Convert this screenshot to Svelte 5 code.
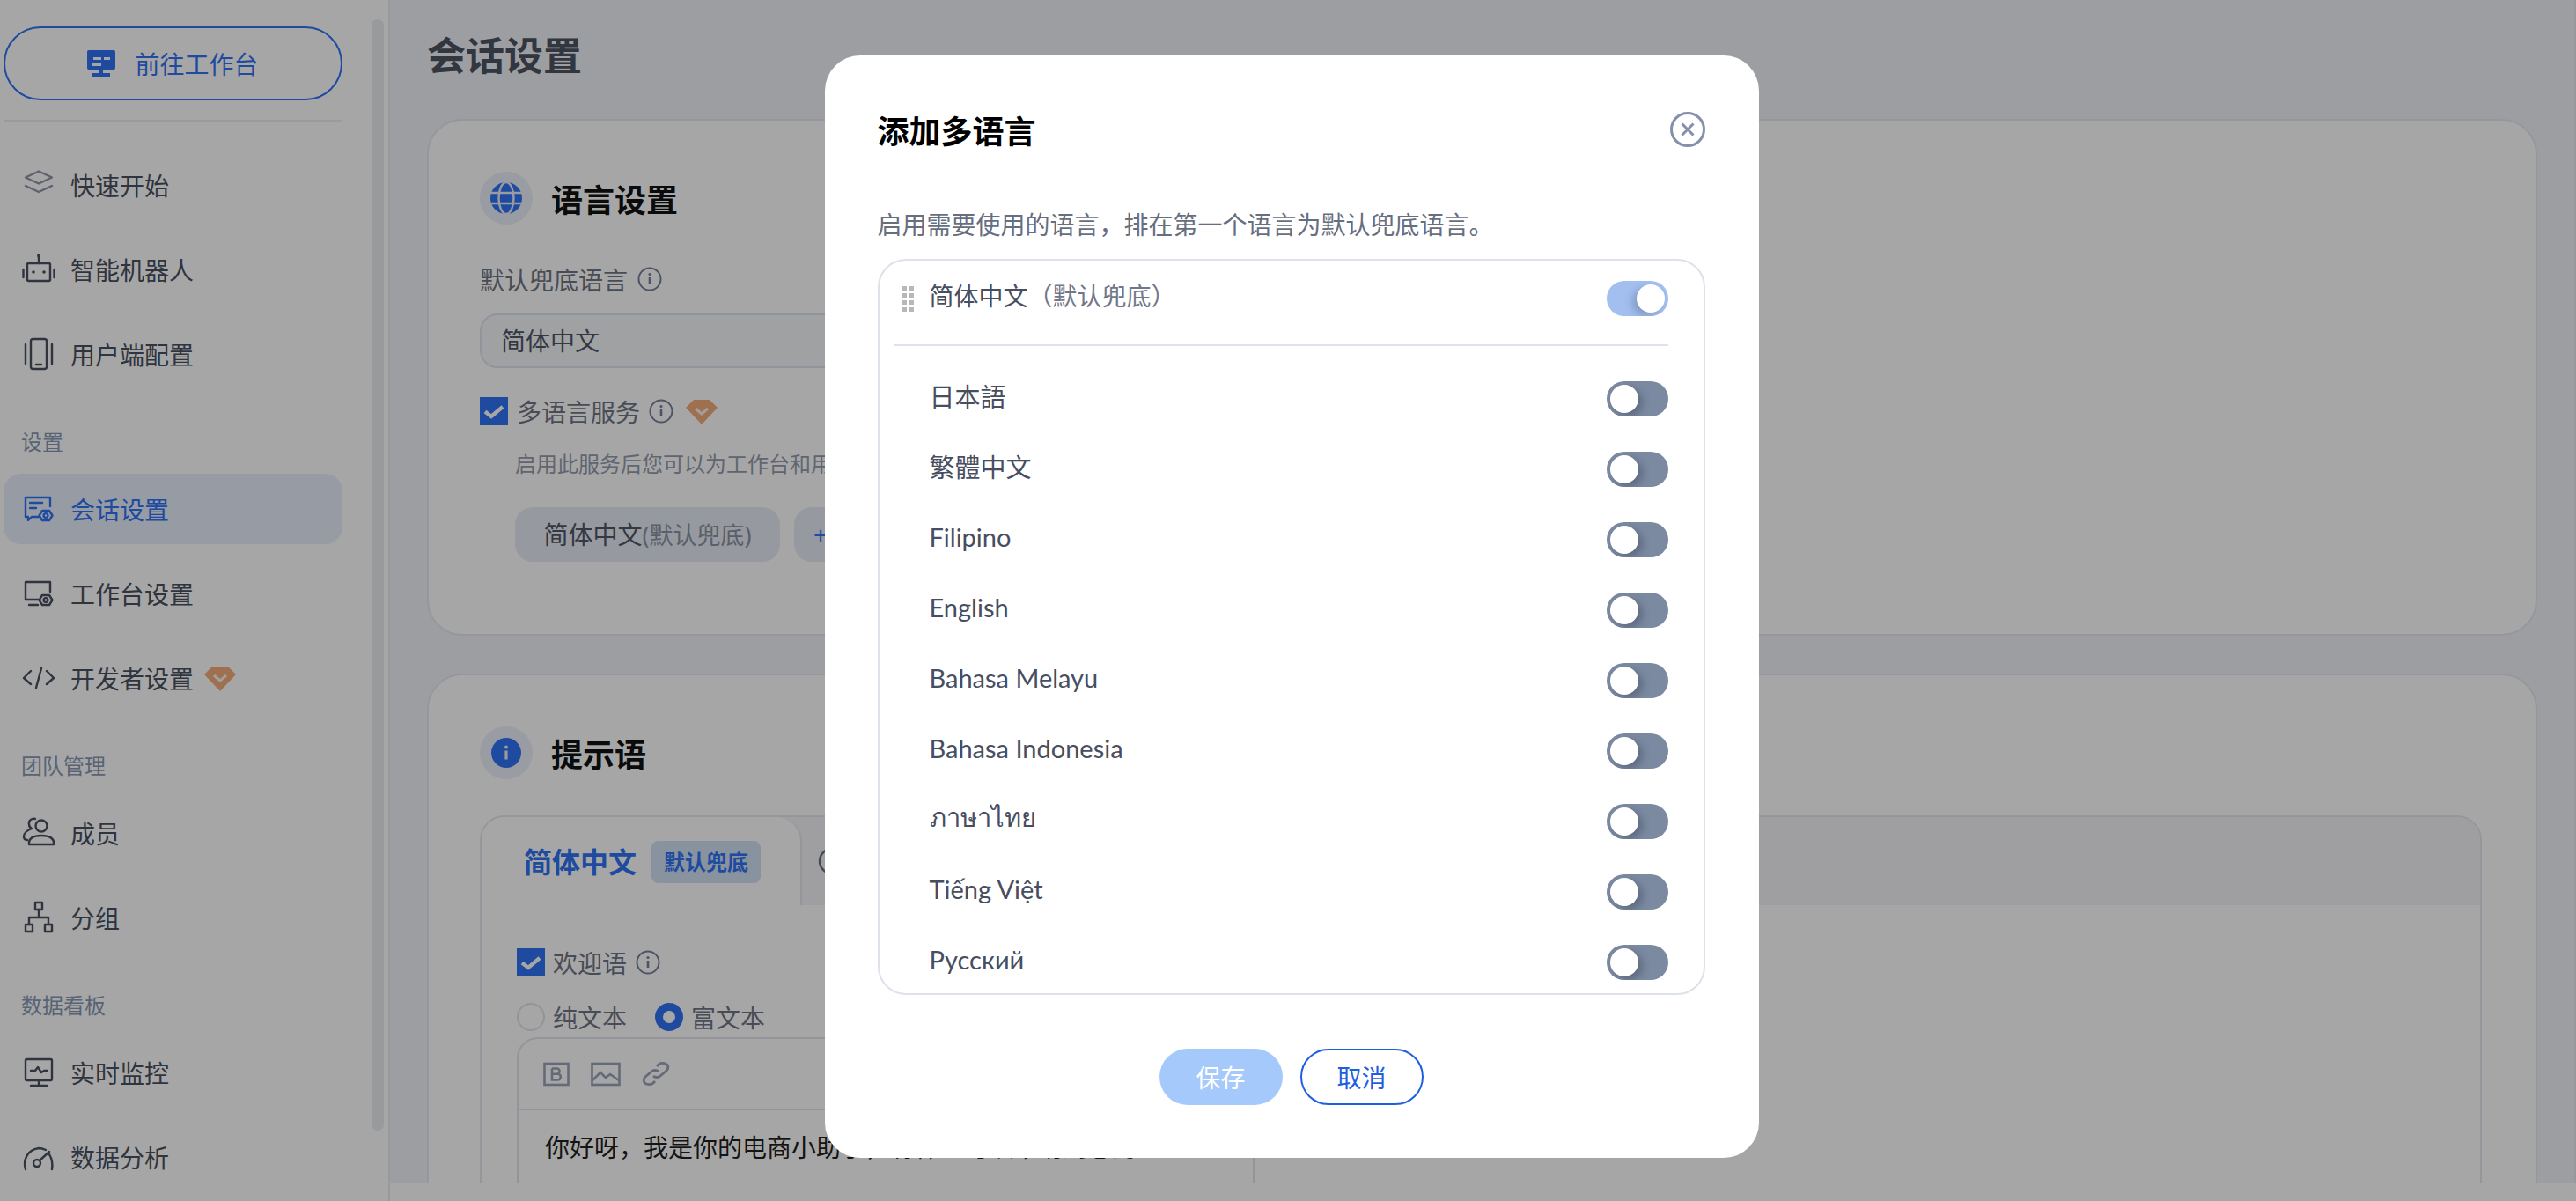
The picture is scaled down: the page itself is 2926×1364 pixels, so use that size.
<script>
	const nav = [
		{ type: 'item', label: '快速开始', icon: 'layers' },
		{ type: 'item', label: '智能机器人', icon: 'robot' },
		{ type: 'item', label: '用户端配置', icon: 'device' },
		{ type: 'section', label: '设置' },
		{ type: 'item', label: '会话设置', icon: 'chat', active: true },
		{ type: 'item', label: '工作台设置', icon: 'screen' },
		{ type: 'item', label: '开发者设置', icon: 'code', pro: true },
		{ type: 'section', label: '团队管理' },
		{ type: 'item', label: '成员', icon: 'members' },
		{ type: 'item', label: '分组', icon: 'group' },
		{ type: 'section', label: '数据看板' },
		{ type: 'item', label: '实时监控', icon: 'monitor' },
		{ type: 'item', label: '数据分析', icon: 'gauge' }
	];

	const languages = ['日本語', '繁體中文', 'Filipino', 'English', 'Bahasa Melayu', 'Bahasa Indonesia', 'ภาษาไทย', 'Tiếng Việt', 'Русский'];
</script>

{#snippet navIcon(name)}
	<svg class="nav-icon" viewBox="0 0 40 40" fill="none" stroke="currentColor" stroke-width="2.4" stroke-linejoin="round" stroke-linecap="round">
		{#if name === 'layers'}
			<path d="M20 4.5 35 11.5 20 18.5 5 11.5Z" />
			<path d="M5 21 20 28 35 21" />
		{:else if name === 'robot'}
			<rect x="7" y="13" width="26" height="20" rx="1.5" />
			<path d="M20 13V6M2.5 20v9M37.5 20v9" />
			<circle cx="20" cy="4.5" r="2" fill="currentColor" stroke="none" />
			<circle cx="14" cy="23" r="1.8" fill="currentColor" stroke="none" />
			<circle cx="26" cy="23" r="1.8" fill="currentColor" stroke="none" />
		{:else if name === 'device'}
			<rect x="11" y="3" width="18" height="34" rx="2.5" />
			<path d="M5 9v22M35 9v22M17 32h6" />
		{:else if name === 'chat'}
			<path d="M20 29H12L8 33v-4H5V7h28v10" />
			<path d="M10 13h14M10 19h7" />
			<path d="M20.5 27.5 24 22h8l3.5 5.5L32 33h-8Z" />
			<circle cx="28" cy="27.5" r="2.4" />
		{:else if name === 'screen'}
			<path d="M19 27H5V7h28v11" />
			<path d="M9 33h10" />
			<path d="M20.5 27.5 24 22h8l3.5 5.5L32 33h-8Z" />
			<circle cx="28" cy="27.5" r="2.4" />
		{:else if name === 'code'}
			<path d="M11 12 3 20l8 7M29 12l8 8-8 7M23 9l-6 22" />
		{:else if name === 'members'}
			<circle cx="23" cy="12" r="6.5" />
			<path d="M9 33c-1-7 5-10 14-10s15 3 14 10Z" />
			<path d="M16 4c-4-1-8 2-7 6 0 2 1 4 3 5-5 2-9 5-9 9 0 3 2 4 4 4" />
		{:else if name === 'group'}
			<rect x="16" y="3" width="8" height="8" />
			<rect x="5" y="28" width="8" height="8" />
			<rect x="27" y="28" width="8" height="8" />
			<path d="M20 11v9M9 28v-8h22v8" />
		{:else if name === 'monitor'}
			<rect x="5" y="5" width="30" height="24" rx="1.5" />
			<path d="M20 29v6M11 35h18M11 18h5l3-4 4 6 3-2h4" />
		{:else if name === 'gauge'}
			<path d="M5 34c-3-9 1-22 15-24 4 0 6 1 8 2M32 17c3 5 4 11 3 17" />
			<circle cx="18" cy="27" r="4" />
			<path d="M21 24 32 14" />
		{/if}
	</svg>
{/snippet}

{#snippet proBadge()}
	<svg class="pro" viewBox="0 0 36 29">
		<path d="M9 1h18l9 9-18 19L0 10Z" fill="#f5ad7c" />
		<path d="M11 11l7 6 7-6" fill="none" stroke="#f4f4f4" stroke-width="3" />
	</svg>
{/snippet}

{#snippet infoTip()}
	<svg class="info" viewBox="0 0 28 28" fill="none" stroke="currentColor" stroke-width="2">
		<circle cx="14" cy="14" r="12.5" />
		<path d="M14 12v8" stroke-width="2.6" />
		<circle cx="14" cy="8.5" r="1.6" fill="currentColor" stroke="none" />
	</svg>
{/snippet}

<div class="page">
	<aside class="sidebar">
		<button class="workbench">
			<svg class="workbench-icon" viewBox="0 0 32 30">
				<path fill-rule="evenodd" d="M2 0h28a2 2 0 0 1 2 2v18a2 2 0 0 1-2 2H2a2 2 0 0 1-2-2V2a2 2 0 0 1 2-2ZM7 8v3h9V8Zm-1 7v3h10v-3Zm13-7v3h7V8Z" fill="#2f72f5" />
				<rect x="6" y="26" width="20" height="4" fill="#2f72f5" />
				<rect x="14" y="21" width="4" height="6" fill="#2f72f5" />
			</svg>
			前往工作台
		</button>
		<div class="side-divider"></div>
		<nav>
			{#each nav as entry}
				{#if entry.type === 'section'}
					<div class="section">{entry.label}</div>
				{:else}
					<div class="nav-item" class:active={entry.active} class:soft={entry.icon === 'layers'}>
						{@render navIcon(entry.icon)}
						<span>{entry.label}</span>
						{#if entry.pro}{@render proBadge()}{/if}
					</div>
				{/if}
			{/each}
		</nav>
		<div class="side-scroll"></div>
	</aside>

	<main>
		<h1>会话设置</h1>

		<section class="card first">
			<div class="card-head">
				<span class="head-icon">
					<svg viewBox="0 0 36 36" width="36" height="36">
						<circle cx="18" cy="18" r="18" fill="#2f72f5" />
						<ellipse cx="18" cy="18" rx="8.5" ry="18" fill="none" stroke="#eceff8" stroke-width="2.4" />
						<path d="M0 12h36M0 24h36" stroke="#eceff8" stroke-width="2.4" />
					</svg>
				</span>
				<h2>语言设置</h2>
			</div>
			<div class="field-label">默认兜底语言 {@render infoTip()}</div>
			<div class="select">简体中文</div>
			<div class="check-row">
				<span class="checkbox"><svg viewBox="0 0 32 32"><path d="M6 16.5 13 22 26 11" fill="none" stroke="#fff" stroke-width="4.4" /></svg></span>
				<span>多语言服务</span>
				{@render infoTip()}
				{@render proBadge()}
			</div>
			<p class="hint">启用此服务后您可以为工作台和用户端配置多语言内容</p>
			<div class="chips">
				<span class="chip">简体中文<em>(默认兜底)</em></span>
				<span class="chip add"><b>+</b>添加多语言</span>
			</div>
		</section>

		<section class="card">
			<div class="card-head">
				<span class="head-icon">
					<svg viewBox="0 0 34 34" width="34" height="34">
						<circle cx="17" cy="17" r="17" fill="#2f72f5" />
						<rect x="15.4" y="14.5" width="3.2" height="10" fill="#eee" />
						<circle cx="17" cy="10.5" r="2" fill="#eee" />
					</svg>
				</span>
				<h2>提示语</h2>
			</div>
			<div class="tabs-panel">
				<div class="tabs">
					<div class="tab active">简体中文<span class="tag">默认兜底</span></div>
					<div class="tab-more"><svg viewBox="0 0 32 32" width="32" height="32" fill="none" stroke="#69707f" stroke-width="2.4"><circle cx="16" cy="16" r="14" /></svg></div>
				</div>
				<div class="tab-body">
					<div class="check-row small">
						<span class="checkbox"><svg viewBox="0 0 32 32"><path d="M6 16.5 13 22 26 11" fill="none" stroke="#fff" stroke-width="4.4" /></svg></span>
						<span>欢迎语</span>
						{@render infoTip()}
					</div>
					<div class="radios">
						<label class="radio"><span class="dot"></span>纯文本</label>
						<label class="radio on"><span class="dot"></span>富文本</label>
					</div>
					<div class="editor">
						<div class="toolbar">
							<svg viewBox="0 0 30 30" width="30" height="30" fill="none" stroke="currentColor" stroke-width="2.6">
								<rect x="1.5" y="3" width="27" height="24" />
								<path d="M10 8.5v13h6.5a3.4 3.4 0 0 0 0-6.8H10m0 0h5.5a3.1 3.1 0 0 0 0-6.2H10" />
							</svg>
							<svg viewBox="0 0 34 30" width="34" height="30" fill="none" stroke="currentColor" stroke-width="2.6">
								<rect x="1.5" y="3" width="31" height="24" />
								<path d="M2 22 11 13l6 6 5-4 10 7" />
							</svg>
							<svg viewBox="0 0 32 30" width="32" height="30" fill="none" stroke="currentColor" stroke-width="2.8">
								<path d="M13 17c2 2 6 2 8 0l7-6c3-3 2-7-1-8s-6-1-8 1l-2 2" />
								<path d="M19 12c-2-2-6-2-8 0l-7 6c-3 3-2 7 1 8s6 1 8-1l2-2" />
							</svg>
						</div>
						<div class="editor-text">你好呀，我是你的电商小助手，有什么可以帮助到您的？</div>
					</div>
				</div>
			</div>
		</section>
	</main>
</div>

<div class="overlay">
	<div class="modal">
		<div class="modal-head">
			<h3>添加多语言</h3>
			<svg viewBox="0 0 40 40" width="40" height="40" fill="none" stroke="#8590ab" stroke-width="3">
				<circle cx="20" cy="20" r="18.5" />
				<path d="M13.5 13.5l13 13M26.5 13.5l-13 13" />
			</svg>
		</div>
		<p class="desc">启用需要使用的语言，排在第一个语言为默认兜底语言。</p>
		<div class="lang-box">
			<div class="lang-row default">
				<span class="handle">
					{#each Array(8) as _}<i></i>{/each}
				</span>
				<span class="lang-name">简体中文<em>（默认兜底）</em></span>
				<span class="switch on"><span class="knob"></span></span>
			</div>
			<div class="lang-divider"></div>
			{#each languages as lang}
				<div class="lang-row">
					<span class="lang-name">{lang}</span>
					<span class="switch"><span class="knob"></span></span>
				</div>
			{/each}
		</div>
		<div class="modal-actions">
			<button class="save">保存</button>
			<button class="cancel">取消</button>
		</div>
	</div>
</div>

<style>
	:global(body) {
		margin: 0;
		background: #fff;
		font-family: "Noto Sans", "Noto Sans CJK SC", sans-serif;
	}

	.page {
		display: flex;
		height: 1364px;
		overflow: hidden;
	}

	/* sidebar */
	.sidebar {
		position: relative;
		box-sizing: border-box;
		flex: 0 0 443px;
		padding: 30px 0 0 4px;
		border-right: 2px solid #ebedf1;
		overflow: hidden;
	}

	.workbench {
		display: flex;
		align-items: center;
		justify-content: center;
		gap: 22px;
		box-sizing: border-box;
		width: 385px;
		height: 84px;
		border: 2px solid #2f72f5;
		border-radius: 42px;
		background: transparent;
		color: #2f72f5;
		font: inherit;
		font-size: 28px;
	}

	.workbench-icon {
		width: 32px;
		height: 30px;
	}

	.side-divider {
		width: 385px;
		height: 2px;
		margin-top: 22px;
		background: #eceef2;
	}

	nav {
		padding-top: 32px;
		width: 385px;
	}

	.nav-item {
		display: flex;
		align-items: center;
		height: 80px;
		margin-bottom: 16px;
		padding-left: 20px;
		border-radius: 20px;
		color: #4a5161;
		font-size: 28px;
	}

	.nav-item.active {
		background: #e9effa;
		color: #2f72f5;
	}

	.nav-item.soft .nav-icon {
		color: #8f97a8;
	}

	.nav-icon {
		flex: none;
		width: 40px;
		height: 40px;
		margin-right: 16px;
	}

	.pro {
		width: 36px;
		height: 29px;
		margin-left: 12px;
		flex: none;
	}

	.section {
		height: 36px;
		margin: 42px 0 18px 20px;
		color: #8798b5;
		font-size: 24px;
		line-height: 36px;
	}

	.side-scroll {
		position: absolute;
		top: 22px;
		left: 422px;
		width: 14px;
		height: 1262px;
		border-radius: 7px;
		background: #ecedef;
	}

	/* main */
	main {
		flex: 1;
		box-sizing: border-box;
		height: 1344px;
		padding: 0 42px 0 42px;
		border-right: 2px solid #e8eaee;
		background: #f1f3f9;
		overflow: hidden;
	}

	h1 {
		height: 126px;
		margin: 0 0 9px;
		color: #4d5361;
		font-size: 44px;
		font-weight: 600;
		line-height: 126px;
	}

	.card {
		box-sizing: border-box;
		padding: 58px 58px 0;
		border: 2px solid #e6e9f2;
		border-radius: 40px;
		background: #fff;
		height: 900px;
	}

	.card.first {
		height: 587px;
		margin-bottom: 43px;
	}

	.card-head {
		display: flex;
		align-items: center;
		gap: 21px;
	}

	.head-icon {
		display: flex;
		align-items: center;
		justify-content: center;
		width: 60px;
		height: 60px;
		border-radius: 50%;
		background: #edf0fa;
	}

	h2 {
		margin: 0;
		color: #111;
		font-size: 36px;
		font-weight: 700;
	}

	.field-label {
		display: flex;
		align-items: center;
		gap: 11px;
		height: 40px;
		margin-top: 42px;
		color: #6f7686;
		font-size: 28px;
	}

	.info {
		width: 28px;
		height: 28px;
		color: #76809a;
		flex: none;
	}

	.select {
		box-sizing: border-box;
		width: 1120px;
		height: 62px;
		margin-top: 19px;
		padding-left: 22px;
		border: 2px solid #e0e4ee;
		border-radius: 20px;
		background: #f6f8fb;
		color: #4f5666;
		font-size: 28px;
		line-height: 58px;
	}

	.check-row {
		display: flex;
		align-items: center;
		height: 40px;
		margin-top: 29px;
		color: #6f7686;
		font-size: 28px;
	}

	.checkbox {
		flex: none;
		width: 32px;
		height: 32px;
		margin-right: 10px;
		background: #2f72f5;
	}

	.checkbox svg {
		display: block;
	}

	.check-row .info {
		margin-left: 10px;
	}

	.check-row .pro {
		margin-left: 14px;
	}

	.hint {
		height: 40px;
		margin: 20px 0 0 40px;
		color: #959cac;
		font-size: 24px;
		line-height: 40px;
	}

	.chips {
		display: flex;
		gap: 16px;
		margin: 29px 0 0 40px;
	}

	.chip {
		box-sizing: border-box;
		width: 301px;
		height: 62px;
		border-radius: 20px;
		background: #e6ebf4;
		color: #4f5666;
		font-size: 28px;
		line-height: 62px;
		text-align: center;
		white-space: nowrap;
	}

	.chip em {
		color: #8c93a3;
		font-size: 27px;
		font-style: normal;
	}

	.chip.add {
		width: 240px;
		padding-left: 22px;
		color: #2f72f5;
		text-align: left;
	}

	.chip b {
		margin-right: 8px;
		font-weight: 400;
	}

	.tabs-panel {
		margin-top: 41px;
		width: 2274px;
		height: 700px;
		border: 2px solid #e4e7ef;
		border-radius: 28px;
		box-sizing: border-box;
		overflow: hidden;
	}

	.tabs {
		display: flex;
		height: 100px;
		background: #f4f5f8;
	}

	.tab {
		display: flex;
		align-items: center;
		box-sizing: border-box;
		width: 364px;
		height: 100px;
		padding: 0 0 2px 48px;
		border-right: 2px solid #e4e7ef;
		border-radius: 0 28px 0 0;
		background: #fff;
		color: #2f72f5;
		font-size: 32px;
		font-weight: 600;
	}

	.tag {
		margin: 4px 0 0 17px;
		padding: 0 14px;
		height: 48px;
		border-radius: 8px;
		background: #d3e0f5;
		font-size: 24px;
		line-height: 48px;
		white-space: nowrap;
	}

	.tab-more {
		padding: 34px 0 0 18px;
	}

	.tab-body {
		padding: 47px 40px 0;
	}

	.check-row.small {
		margin-top: 0;
		height: 36px;
	}

	.check-row.small .checkbox {
		margin-right: 9px;
	}

	.radios {
		display: flex;
		gap: 32px;
		margin-top: 24px;
		height: 40px;
	}

	.radio {
		display: flex;
		align-items: center;
		gap: 9px;
		color: #6f7686;
		font-size: 28px;
	}

	.dot {
		box-sizing: border-box;
		width: 32px;
		height: 32px;
		border: 2px solid #e0e3ec;
		border-radius: 50%;
	}

	.radio.on .dot {
		border: 9px solid #2f72f5;
	}

	.editor {
		box-sizing: border-box;
		width: 838px;
		height: 400px;
		margin-top: 3px;
		border: 2px solid #e2e5ee;
		border-radius: 24px 24px 0 0;
	}

	.toolbar {
		display: flex;
		align-items: center;
		gap: 24px;
		box-sizing: border-box;
		height: 81px;
		padding: 0 0 0 28px;
		border-bottom: 2px solid #e2e5ee;
		color: #9aa3b8;
	}

	.editor-text {
		padding: 22px 0 0 30px;
		color: #1f1f1f;
		font-size: 28px;
		line-height: 40px;
		white-space: nowrap;
	}

	/* modal */
	.overlay {
		position: fixed;
		inset: 0;
		display: flex;
		align-items: flex-start;
		justify-content: center;
		padding: 63px 0 0 8px;
		background: rgba(0, 0, 0, 0.35);
	}

	.modal {
		box-sizing: border-box;
		width: 1061px;
		height: 1252px;
		padding: 64px 61px 0 60px;
		border-radius: 40px;
		background: #fff;
	}

	.modal-head {
		display: flex;
		align-items: center;
		justify-content: space-between;
		height: 40px;
	}

	h3 {
		margin: 0;
		color: #000;
		font-size: 36px;
		font-weight: 700;
	}

	.desc {
		height: 40px;
		margin: 68px 0 19px;
		color: #676e7e;
		font-size: 28px;
		line-height: 40px;
		white-space: nowrap;
	}

	.lang-box {
		box-sizing: border-box;
		height: 836px;
		padding-top: 3px;
		border: 2px solid #dde1ea;
		border-radius: 32px;
		overflow: hidden;
	}

	.lang-row {
		display: flex;
		align-items: center;
		justify-content: space-between;
		height: 80px;
		padding: 0 40px 0 57px;
		color: #474e5f;
		font-family: Lato, "Noto Sans", "Noto Sans CJK SC", sans-serif;
		font-size: 29px;
	}

	.lang-row.default {
		justify-content: flex-start;
		padding-left: 26px;
		font-size: 28px;
	}

	.lang-name {
		margin-bottom: 8px;
		white-space: nowrap;
	}

	.lang-name em {
		color: #70778a;
		font-style: normal;
	}

	.handle {
		display: grid;
		grid-template-columns: 5px 5px;
		gap: 3px;
		width: 13px;
		margin-right: 18px;
	}

	.handle i {
		width: 5px;
		height: 5px;
		background: #b8b8b8;
	}

	.default .switch {
		margin-left: auto;
	}

	.lang-divider {
		height: 2px;
		margin: 12px 40px 20px 16px;
		background: #dfe2ec;
	}

	.switch {
		position: relative;
		flex: none;
		width: 70px;
		height: 40px;
		border-radius: 20px;
		background: #7b8aa1;
		overflow: hidden;
	}

	.knob {
		position: absolute;
		top: 4px;
		left: 4px;
		width: 32px;
		height: 32px;
		border-radius: 50%;
		background: #fff;
		box-shadow: 5px 4px 8px rgba(40, 50, 70, 0.35);
	}

	.switch.on {
		background: #a2bff0;
	}

	.switch.on .knob {
		left: 34px;
		box-shadow: -5px 4px 8px rgba(40, 50, 70, 0.25);
	}

	.modal-actions {
		display: flex;
		justify-content: center;
		gap: 20px;
		margin-top: 61px;
	}

	.modal-actions button {
		box-sizing: border-box;
		width: 140px;
		height: 64px;
		border-radius: 32px;
		font: inherit;
		font-size: 28px;
	}

	.save {
		border: 0;
		background: #a6c9fb;
		color: #fff;
	}

	.cancel {
		border: 2px solid #1d5fe0;
		background: #fff;
		color: #1d5fe0;
	}
</style>
